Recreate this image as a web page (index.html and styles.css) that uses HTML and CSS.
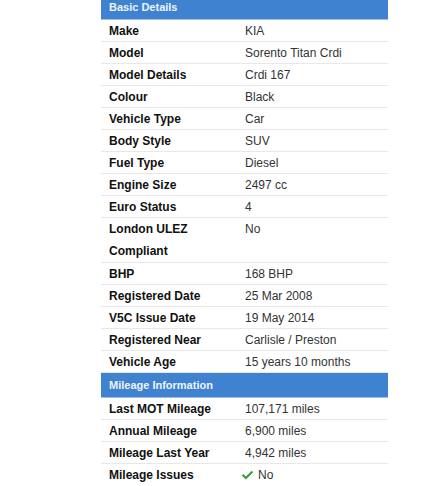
FILE: index.html
```html
<!DOCTYPE html>
<html>
<head>
<meta charset="utf-8">
<link rel="stylesheet" href="styles.css">
</head>
<body>
<div class="panel">
  <div class="section-head">Basic Details</div>
  <div class="row"><div class="label">Make</div><div class="value">KIA</div></div>
  <div class="row"><div class="label">Model</div><div class="value">Sorento Titan Crdi</div></div>
  <div class="row"><div class="label">Model Details</div><div class="value">Crdi 167</div></div>
  <div class="row"><div class="label">Colour</div><div class="value">Black</div></div>
  <div class="row"><div class="label">Vehicle Type</div><div class="value">Car</div></div>
  <div class="row"><div class="label">Body Style</div><div class="value">SUV</div></div>
  <div class="row"><div class="label">Fuel Type</div><div class="value">Diesel</div></div>
  <div class="row"><div class="label">Engine Size</div><div class="value">2497 cc</div></div>
  <div class="row"><div class="label">Euro Status</div><div class="value">4</div></div>
  <div class="row row-tall"><div class="label">London ULEZ Compliant</div><div class="value">No</div></div>
  <div class="row"><div class="label">BHP</div><div class="value">168 BHP</div></div>
  <div class="row"><div class="label">Registered Date</div><div class="value">25 Mar 2008</div></div>
  <div class="row"><div class="label">V5C Issue Date</div><div class="value">19 May 2014</div></div>
  <div class="row"><div class="label">Registered Near</div><div class="value">Carlisle / Preston</div></div>
  <div class="row"><div class="label">Vehicle Age</div><div class="value">15 years 10 months</div></div>
  <div class="section-head">Mileage Information</div>
  <div class="row"><div class="label">Last MOT Mileage</div><div class="value">107,171 miles</div></div>
  <div class="row"><div class="label">Annual Mileage</div><div class="value">6,900 miles</div></div>
  <div class="row"><div class="label">Mileage Last Year</div><div class="value">4,942 miles</div></div>
  <div class="row"><div class="label">Mileage Issues</div><div class="value"><span class="status"><svg class="check" viewBox="0 0 16 12" width="13" height="10"><path d="M1 6.5 L2.8 4.7 L6 7.9 L13.2 0.7 L15 2.5 L6 11.5 Z" fill="#3d9a3d"/></svg>No</span></div></div>
</div>
</body>
</html>
```
FILE: styles.css
```css
html, body {
  margin: 0;
  padding: 0;
  background: #ffffff;
}
body {
  font-family: "Liberation Sans", Arial, sans-serif;
  font-size: 12px;
}
.panel {
  width: 287px;
  margin: -5px 0 0 101px;
}
.section-head {
  height: 23px;
  padding-top: 1px;
  line-height: 23px;
  background: #3f83d0;
  color: #eef3fb;
  font-weight: bold;
  font-size: 11px;
  padding-left: 8px;
  border-bottom: 1px solid #9cc0ea;
}
.row {
  display: grid;
  grid-template-columns: 144px 1fr;
  line-height: 20px;
  padding-top: 1px;
  border-bottom: 1px solid #e8e8e8;
}
.row-tall {
  line-height: 21.5px;
}
.label {
  padding-left: 8px;
  padding-right: 4px;
  font-weight: bold;
  color: #111111;
}
.value {
  color: #333333;
}
.status {
  display: inline-flex;
  align-items: center;
}
.check {
  margin-left: -4px;
  margin-right: 4px;
}
```
